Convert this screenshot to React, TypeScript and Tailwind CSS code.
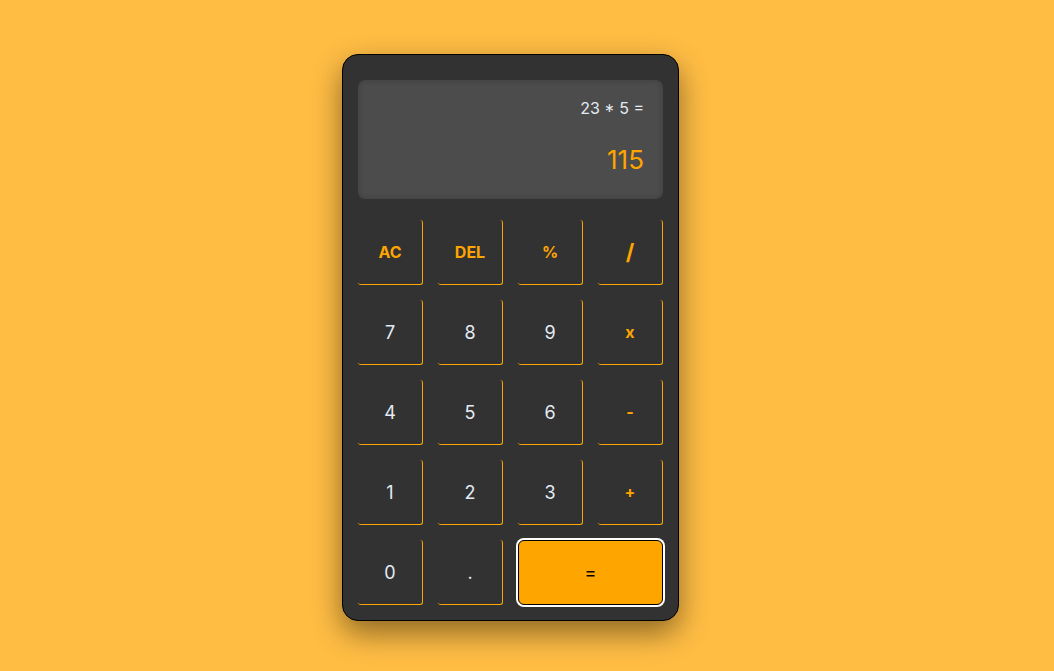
const keys: { label: string; kind: "op" | "num" | "eq"; big?: boolean }[] = [
  { label: "AC", kind: "op" },
  { label: "DEL", kind: "op" },
  { label: "%", kind: "op" },
  { label: "/", kind: "op", big: true },
  { label: "7", kind: "num" },
  { label: "8", kind: "num" },
  { label: "9", kind: "num" },
  { label: "x", kind: "op" },
  { label: "4", kind: "num" },
  { label: "5", kind: "num" },
  { label: "6", kind: "num" },
  { label: "-", kind: "op" },
  { label: "1", kind: "num" },
  { label: "2", kind: "num" },
  { label: "3", kind: "num" },
  { label: "+", kind: "op" },
  { label: "0", kind: "num" },
  { label: ".", kind: "num" },
  { label: "=", kind: "eq" },
];

export default function App() {
  return (
    <div
      className="flex min-h-[671px] justify-center bg-[#ffbd44] pr-[33px] pt-[54px]"
      style={{ fontFamily: "Inter, 'Noto Sans', sans-serif" }}
    >
      <div className="h-[567px] w-[337px] rounded-[16px] border border-black bg-[#323232] px-[15px] pb-[15px] pt-[25px] shadow-[0_12px_30px_rgba(0,0,0,0.45)]">
        {/* Display */}
        <div className="flex h-[119px] flex-col items-end rounded-[7px] bg-[#4c4c4c] px-[19px] pt-[18px] shadow-[inset_0_0_6px_rgba(0,0,0,0.2)]">
          <p className="text-[16px] leading-[20px] text-[#e4ebf2]">23 * 5 =</p>
          <p className="mt-[27px] text-[26px] leading-[30px] text-[#ffa500]">115</p>
        </div>

        {/* Keys */}
        <div className="mt-[21px] grid grid-cols-4 gap-[15px]">
          {keys.map((k) =>
            k.kind === "eq" ? (
              <button
                key={k.label}
                className="col-span-2 h-[65px] rounded-[6px] border border-black bg-[#ffa500] text-[18px] text-black ring-2 ring-white"
              >
                {k.label}
              </button>
            ) : (
              <button
                key={k.label}
                className={
                  "h-[65px] rounded-[3px] border-b border-r border-[#ffa500] " +
                  (k.kind === "op"
                    ? k.big
                      ? "text-[22px] font-bold text-[#ffa500]"
                      : "text-[16px] font-bold text-[#ffa500]"
                    : "text-[18px] text-[#e4ebf2]")
                }
              >
                {k.label}
              </button>
            )
          )}
        </div>
      </div>
    </div>
  );
}
